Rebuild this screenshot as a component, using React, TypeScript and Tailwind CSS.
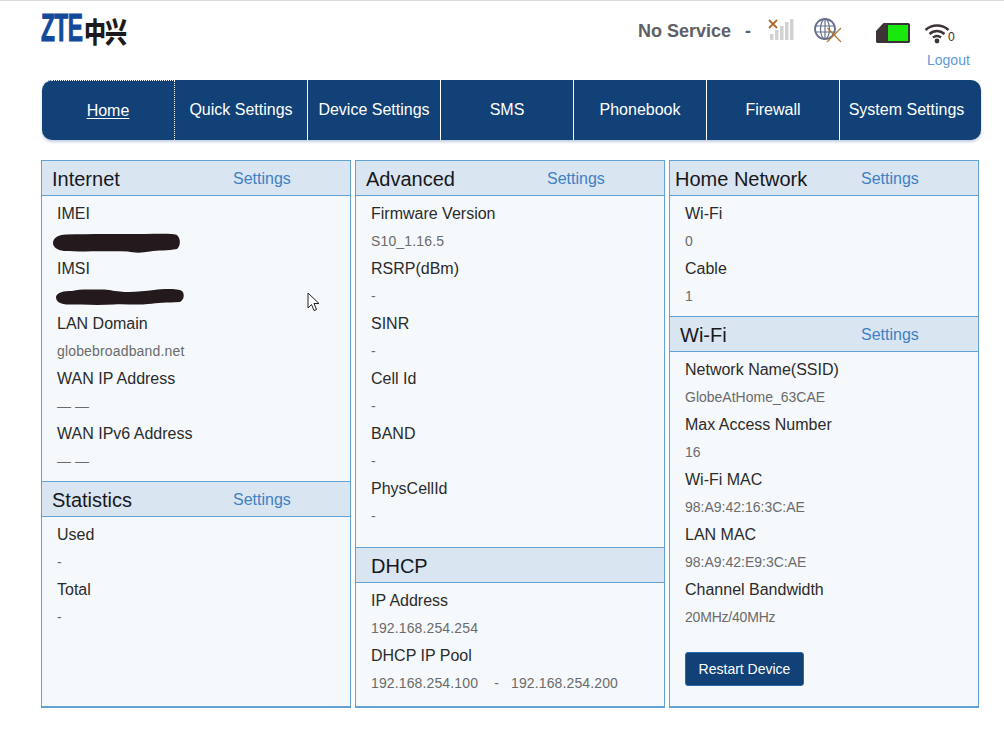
const sans = "font-['Liberation_Sans',Arial,sans-serif]";

const navItems = ["Home", "Quick Settings", "Device Settings", "SMS", "Phonebook", "Firewall", "System Settings"];

type Row = { label: string; value?: string; blot?: "a" | "b"; valueClass?: string };

function Blot({ kind }: { kind: "a" | "b" }) {
  if (kind === "a") {
    return (
      <svg width="132" height="22" viewBox="0 0 132 22" className="block">
        <path
          d="M3 11C3 6 8 3 16 2.500C40 1.500 70 2 96 2C108 1.500 122 1.500 126 2.500C131 5 131 14 127 17C118 19 108 18 100 19.500C92 21 84 21 78 19.500C56 19 30 20 14 19C7 18 3 15 3 11Z"
          fill="#241a1e"
        />
      </svg>
    );
  }
  return (
    <svg width="132" height="20" viewBox="0 0 132 20" className="block">
      <path
        d="M2 10C3 5 10 4 18 4C28 1.500 38 3 46 2.500C54 2 58 4 66 4.500C78 6 88 4 100 3C110 1.500 124 1.500 128 4C131 7 130 13 126 15C112 15.500 104 16 94 17C82 18.500 70 16.500 60 17.500C44 18.500 26 17.500 12 17.500C5 16.500 2 14 2 10Z"
        fill="#241a1e"
      />
    </svg>
  );
}

function Section({
  title,
  titleClass,
  settings = true,
  rows,
  grow,
  bodyClass,
  children,
}: {
  title: string;
  titleClass: string;
  settings?: boolean;
  rows: Row[];
  grow?: boolean;
  bodyClass: string;
  children?: React.ReactNode;
}) {
  return (
    <section className={grow ? "flex flex-1 flex-col" : "flex flex-col"}>
      <div className="relative flex h-[35px] shrink-0 items-center border-b border-[#62a2d4] bg-[#dae5f2] pt-[2px]">
        <h2 className={`text-[20px] leading-none text-[#16181c] ${titleClass}`}>{title}</h2>
        {settings && (
          <a className="absolute left-[191px] top-[8px] text-[16px] leading-[19px] text-[#4080c4]">Settings</a>
        )}
      </div>
      <div className={`${bodyClass} ${grow ? "flex-1" : ""}`}>
        {rows.map((r) => (
          <div key={r.label}>
            <div className="flex h-[27px] items-center pl-[15px] text-[16px] text-[#2b2b2b]">{r.label}</div>
            {r.blot ? (
              <div className={r.blot === "a" ? "flex h-[28px] items-center pl-[8px] pt-[3px]" : "flex h-[28px] items-center pl-[12px] pt-[1px]"}>
                <Blot kind={r.blot} />
              </div>
            ) : (
              <div className={`flex h-[28px] items-center whitespace-pre pl-[15px] text-[14px] text-[#6b6b6b] ${r.valueClass ?? ""}`}>
                {r.value}
              </div>
            )}
          </div>
        ))}
        {children}
      </div>
    </section>
  );
}

function StatusIcons() {
  return (
    <div className="mt-[16px] flex items-start">
      {/* signal, crossed out */}
      <svg width="28" height="26" viewBox="0 0 28 26" className="ml-[17px]">
        <g fill="#d2d2d2">
          <rect x="2" y="17" width="3.500" height="6" />
          <rect x="7" y="13" width="3.500" height="10" />
          <rect x="12" y="9" width="3.500" height="14" />
          <rect x="17" y="5" width="3.500" height="18" />
          <rect x="22" y="2" width="3.500" height="21" />
        </g>
        <path d="M1 3L9 11M9 3L1 11" stroke="#b2682d" strokeWidth="1.800" />
      </svg>
      {/* globe, crossed out */}
      <svg width="30" height="28" viewBox="0 0 30 28" className="ml-[17px]">
        <g fill="none" stroke="#66708a" strokeWidth="1.200">
          <circle cx="12" cy="12" r="10" strokeWidth="1.800" />
          <ellipse cx="12" cy="12" rx="4.500" ry="10" />
          <path d="M12 2V22M2.500 9H21.500M2.500 15H21.500" />
        </g>
        <path d="M14 25L28 11M14.500 11L28 25" stroke="#b2762f" strokeWidth="1.200" />
      </svg>
      {/* sim / battery */}
      <svg width="36" height="22" viewBox="0 0 36 22" className="ml-[32px] mt-[5px]">
        <path d="M1 9L8 1.500C8.500 1 9 1 10 1H33C34.500 1 35 2 35 3V19C35 20.500 34.500 21 33 21H3C1.500 21 1 20.500 1 19Z" fill="#3d3236" />
        <rect x="13" y="3" width="20" height="16" fill="#19e80f" />
      </svg>
      {/* wifi */}
      <div className="relative ml-[13px] mt-[5px] h-[24px] w-[30px]">
        <svg width="26" height="22" viewBox="0 0 26 22">
          <g fill="none" stroke="#3d3236" strokeWidth="2.400">
            <path d="M1.500 8C8 2 18 2 24.500 8" />
            <path d="M5.500 12C10 8 16 8 20.500 12" />
            <path d="M9 15.500C11.500 13.500 14.500 13.500 17 15.500" />
          </g>
          <circle cx="13" cy="19" r="2.400" fill="#3d3236" />
        </svg>
        <span className="absolute left-[24px] top-[9px] text-[12px] leading-[13px] text-[#333]">0</span>
      </div>
    </div>
  );
}

export default function App() {
  return (
    <div className={`${sans} h-[734px] w-[1004px] overflow-hidden border-t border-[#dcdcdc] bg-white`}>
      <header className="flex h-[79px] pl-[41px]">
        <div className="relative mt-[9px] h-[36px] w-[86px]">
          <span className="absolute left-0 top-[-1px] origin-left scale-x-[0.6] text-[38px] font-bold leading-none tracking-[-1px] text-[#12499b] [-webkit-text-stroke:1px_#12499b]">
            ZTE
          </span>
          <span className="absolute left-[43px] top-[6px] origin-top scale-y-[1.3] font-['Noto_Sans_CJK_SC',sans-serif] text-[22px] font-black leading-none tracking-[-1px] text-[#1c1a1c]">
            中兴
          </span>
        </div>
        <div className="ml-[510px] flex flex-col">
          <div className="flex">
            <div className="mt-[18px] flex text-[18px] font-bold leading-[24px] text-[#5f5f66]">
              <span className="ml-[1px]">No Service</span>
              <span className="ml-[14px]">-</span>
            </div>
            <StatusIcons />
          </div>
          <a className="ml-[290px] mt-[4px] text-[14px] leading-[20px] text-[#5b9bd5]">Logout</a>
        </div>
      </header>

      <nav className="ml-[42px] flex h-[60px] w-[939px] rounded-[10px] bg-[#114176] shadow-[0_2px_3px_rgba(120,150,190,0.45)]">
        {navItems.map((item, i) => (
          <a
            key={item}
            className={`flex h-full w-[133px] items-center justify-center text-[16px] text-white ${
              i === 0 ? "rounded-l-[10px] border-t border-r border-dotted border-white underline underline-offset-2" : ""
            } ${i > 0 && i < 6 ? "border-r border-white" : ""}`}
          >
            {item}
          </a>
        ))}
      </nav>

      <main className="ml-[41px] mt-[20px] grid h-[548px] w-[938px] grid-cols-[310px_310px_310px] gap-x-[4px]">
        <div className="flex flex-col border border-b-2 border-[#62a2d4] bg-[#f5f9fb]">
          <Section
            title="Internet"
            titleClass="pl-[10px]"
            bodyClass="h-[286px] border-b border-[#62a2d4] pt-[4px]"
            rows={[
              { label: "IMEI", blot: "a" },
              { label: "IMSI", blot: "b" },
              { label: "LAN Domain", value: "globebroadband.net", valueClass: "tracking-[0.16px]" },
              { label: "WAN IP Address", value: "— —" },
              { label: "WAN IPv6 Address", value: "— —" },
            ]}
          />
          <Section
            grow
            title="Statistics"
            titleClass="pl-[10px]"
            bodyClass="pt-[4px]"
            rows={[
              { label: "Used", value: "-" },
              { label: "Total", value: "-" },
            ]}
          />
        </div>

        <div className="flex flex-col border border-b-2 border-[#62a2d4] bg-[#f5f9fb]">
          <Section
            title="Advanced"
            titleClass="pl-[10px]"
            bodyClass="h-[352px] border-b border-[#62a2d4] pt-[4px]"
            rows={[
              { label: "Firmware Version", value: "S10_1.16.5", valueClass: "tracking-[0.15px]" },
              { label: "RSRP(dBm)", value: "-" },
              { label: "SINR", value: "-" },
              { label: "Cell Id", value: "-" },
              { label: "BAND", value: "-" },
              { label: "PhysCellId", value: "-" },
            ]}
          />
          <Section
            grow
            settings={false}
            title="DHCP"
            titleClass="pl-[15px]"
            bodyClass="pt-[4px]"
            rows={[
              { label: "IP Address", value: "192.168.254.254", valueClass: "tracking-[0.13px]" },
              { label: "DHCP IP Pool", value: "192.168.254.100    -   192.168.254.200", valueClass: "tracking-[0.13px]" },
            ]}
          />
        </div>

        <div className="flex flex-col border border-b-2 border-[#62a2d4] bg-[#f5f9fb]">
          <Section
            title="Home Network"
            titleClass="pl-[5px]"
            bodyClass="h-[121px] border-b border-[#62a2d4] pt-[4px]"
            rows={[
              { label: "Wi-Fi", value: "0" },
              { label: "Cable", value: "1" },
            ]}
          />
          <Section
            grow
            title="Wi-Fi"
            titleClass="pl-[10px]"
            bodyClass="pt-[4px]"
            rows={[
              { label: "Network Name(SSID)", value: "GlobeAtHome_63CAE" },
              { label: "Max Access Number", value: "16" },
              { label: "Wi-Fi MAC", value: "98:A9:42:16:3C:AE" },
              { label: "LAN MAC", value: "98:A9:42:E9:3C:AE" },
              { label: "Channel Bandwidth", value: "20MHz/40MHz", valueClass: "tracking-[-0.2px]" },
            ]}
          >
            <button className="ml-[15px] mt-[21px] h-[34px] w-[119px] rounded-[3px] border border-[#2a6aa8] bg-[#114176] text-[14px] text-white">
              Restart Device
            </button>
          </Section>
        </div>
      </main>

      {/* mouse pointer caught in the screenshot */}
      <svg width="14" height="21" viewBox="0 0 14 21" className="absolute left-[307px] top-[292px]">
        <path d="M1 1V16L4.500 12.500L7 18.500L9.500 17.500L7 11.500H12Z" fill="#fff" stroke="#222" strokeWidth="1" />
      </svg>
    </div>
  );
}
